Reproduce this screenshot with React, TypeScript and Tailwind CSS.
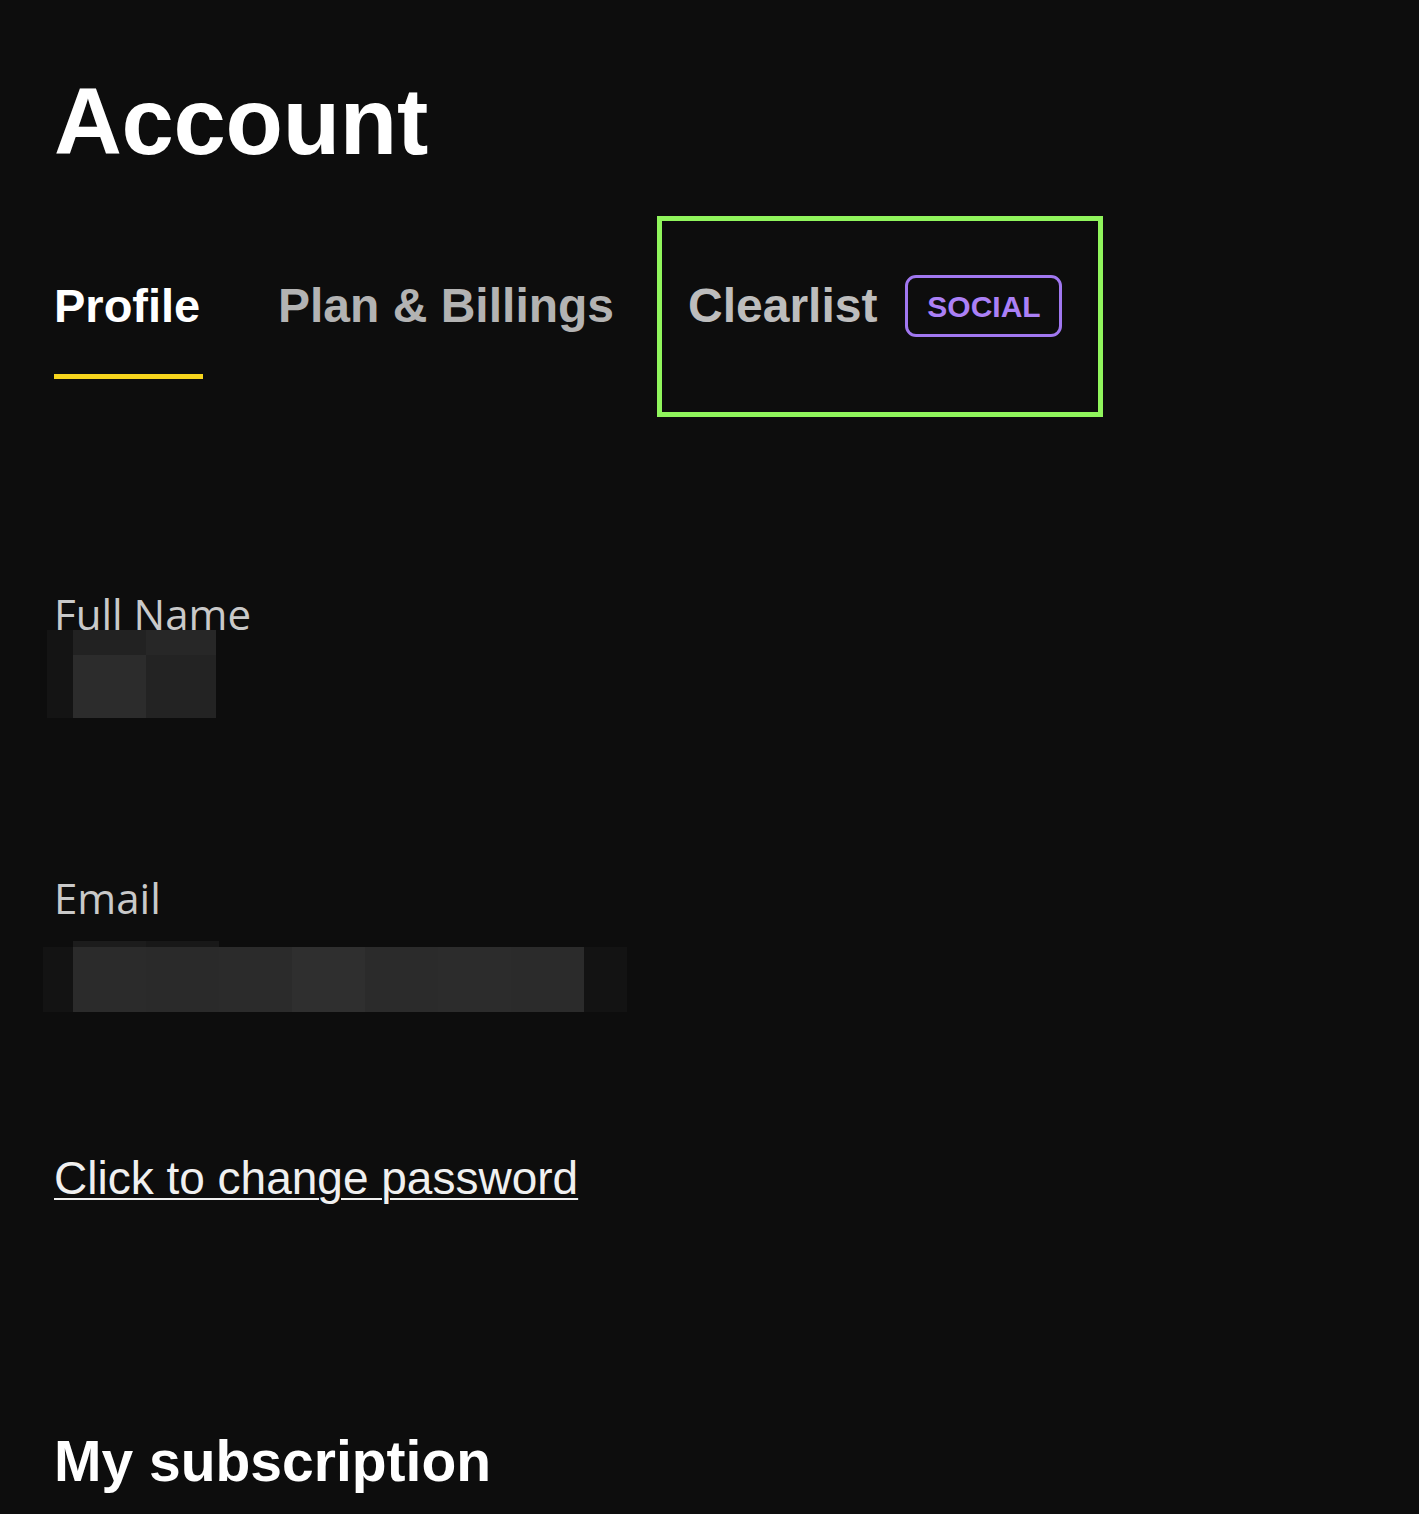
import React from 'react';

const sans = "font-['Liberation_Sans',Arial,sans-serif]";

function Tab({ label, active, size }: { label: string; active?: boolean; size: string }) {
  return (
    <div className="flex flex-col pt-[66px]">
      <span className={`${size} leading-[48px] font-bold ${active ? 'text-white' : 'text-[#b3b3b3]'}`}>
        {label}
      </span>
      {active && <div className="mt-[44px] h-[5px] w-[149px] bg-[#f7d51d]" />}
    </div>
  );
}

function NameBlur() {
  return (
    <div className="flex h-[88px] ml-[-7px] mt-[-2px]">
      <div className="w-[26px] bg-[#141414]" />
      <div className="w-[73px] flex flex-col">
        <div className="h-[25px] bg-[#222222]" />
        <div className="flex-1 bg-[#2c2c2c]" />
      </div>
      <div className="w-[70px] flex flex-col">
        <div className="h-[25px] bg-[#272727]" />
        <div className="flex-1 bg-[#232323]" />
      </div>
    </div>
  );
}

const emailCells = ['#2b2b2b', '#2a2a2a', '#2b2b2b', '#2f2f2f', '#2b2b2b', '#2c2c2c', '#2b2b2b'];

function EmailBlur() {
  return (
    <div className="flex flex-col ml-[-11px] mt-[25px]">
      <div className="flex h-[6px]">
        <div className="w-[30px]" />
        <div className="w-[73px] bg-[#1c1c1c]" />
        <div className="w-[73px] bg-[#181818]" />
      </div>
      <div className="flex h-[65px]">
        <div className="w-[30px] bg-[#131313]" />
        {emailCells.map((c, i) => (
          <div key={i} className="w-[73px]" style={{ backgroundColor: c }} />
        ))}
        <div className="w-[43px] bg-[#131313]" />
      </div>
    </div>
  );
}

export default function App() {
  return (
    <div className={`min-h-[1514px] w-full bg-[#0d0d0d] ${sans} pl-[54px] pt-[75px] overflow-hidden`}>
      <h1 className="text-[94px] leading-[94px] font-bold text-white tracking-[-0.3px]">Account</h1>

      <div className="flex items-start mt-[47px]">
        <Tab label="Profile" size="text-[47px]" active />
        <div className="ml-[75px]">
          <Tab label="Plan & Billings" size="text-[48px]" />
        </div>
        <div className="ml-[43px] w-[446px] h-[201px] border-[5px] border-[#90f55c] pl-[26px] pt-[54px]">
          <div className="flex items-center">
            <span className="text-[48px] leading-[48px] font-bold text-[#bdbdbd]">Clearlist</span>
            <span className="ml-[28px] w-[157px] h-[62px] rounded-[11px] border-[3px] border-[#a077f0] flex items-center justify-center text-[30px] font-bold text-[#ab80f6]">
              SOCIAL
            </span>
          </div>
        </div>
      </div>

      <div className="mt-[179px] text-[42px] leading-[36px] text-[#c9c9c9] font-['Open_Sans',sans-serif]">Full Name</div>
      <NameBlur />

      <div className="mt-[162px] text-[42px] leading-[36px] text-[#c9c9c9] font-['Open_Sans',sans-serif]">Email</div>
      <EmailBlur />

      <a className="block mt-[143px] text-[46px] leading-[46px] text-[#f0f0f0] underline decoration-2 underline-offset-[4px] w-fit cursor-pointer">
        Click to change password
      </a>

      <h2 className="mt-[232px] text-[57px] leading-[56px] font-bold text-white">My subscription</h2>
    </div>
  );
}
